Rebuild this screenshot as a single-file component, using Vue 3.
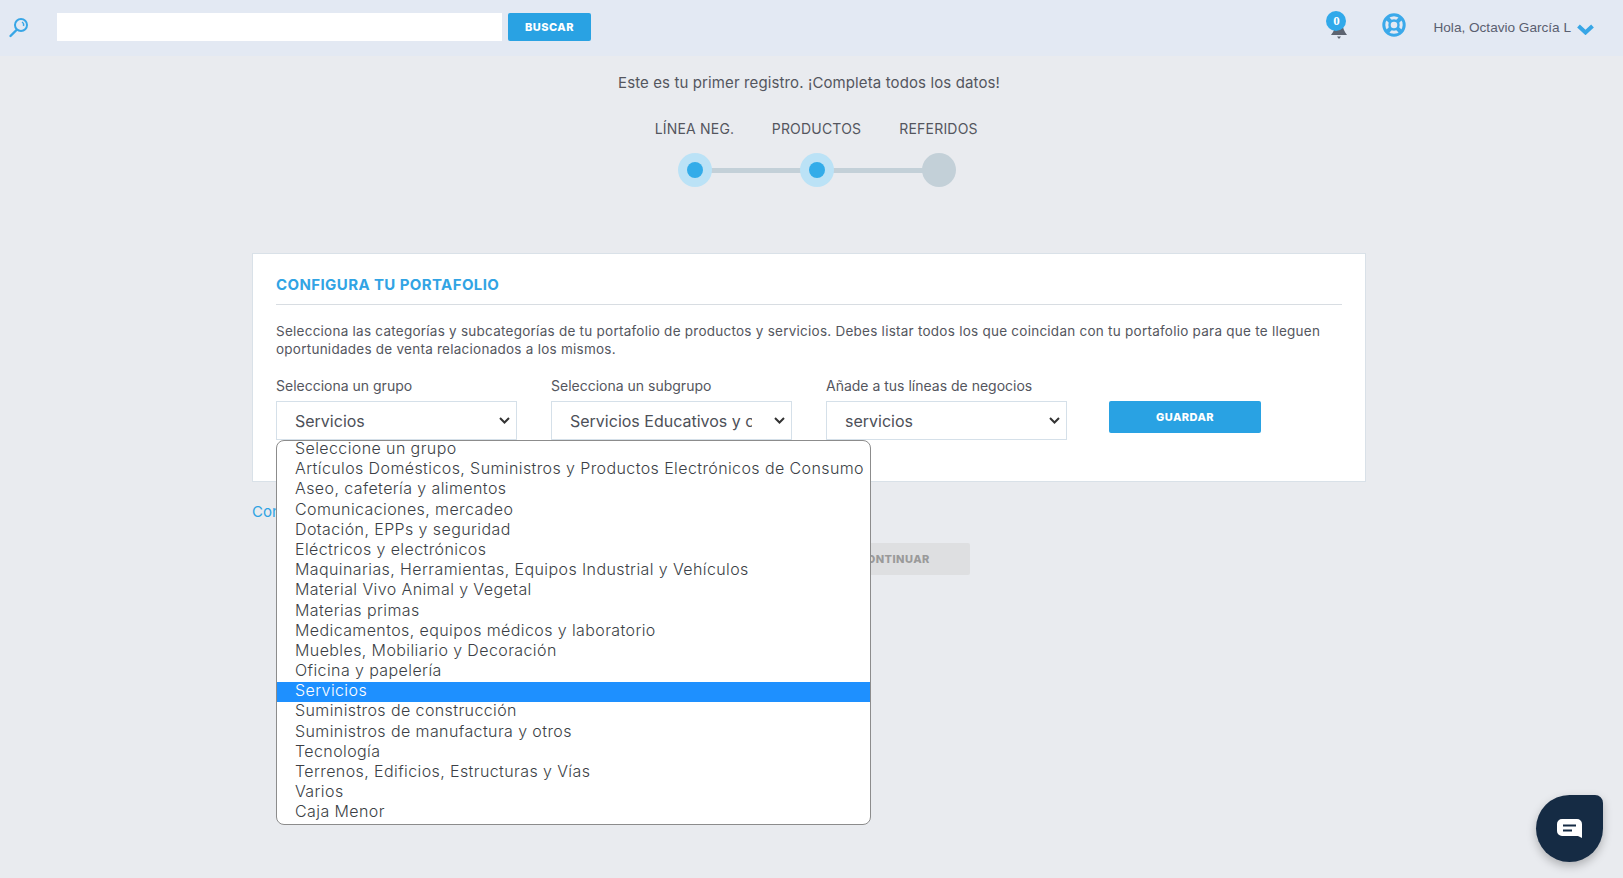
<script setup>
const groups = [
  'Seleccione un grupo',
  'Artículos Domésticos, Suministros y Productos Electrónicos de Consumo',
  'Aseo, cafetería y alimentos',
  'Comunicaciones, mercadeo',
  'Dotación, EPPs y seguridad',
  'Eléctricos y electrónicos',
  'Maquinarias, Herramientas, Equipos Industrial y Vehículos',
  'Material Vivo Animal y Vegetal',
  'Materias primas',
  'Medicamentos, equipos médicos y laboratorio',
  'Muebles, Mobiliario y Decoración',
  'Oficina y papelería',
  'Servicios',
  'Suministros de construcción',
  'Suministros de manufactura y otros',
  'Tecnología',
  'Terrenos, Edificios, Estructuras y Vías',
  'Varios',
  'Caja Menor'
]
const steps = [
  { label: 'LÍNEA NEG.', done: true },
  { label: 'PRODUCTOS', done: true },
  { label: 'REFERIDOS', done: false }
]
</script>

<template>
  <div class="page">
    <header class="topbar">
      <svg class="search-icon" width="22" height="24" viewBox="0 0 22 24" fill="none" stroke="#38a6e6">
        <circle cx="13" cy="10" r="6" stroke-width="2" />
        <path d="M14 7a3.5 3.5 0 0 1 1.5 4" stroke-width="1.4" />
        <path d="M8.5 15 L2.5 21" stroke-width="2.4" stroke-linecap="round" />
      </svg>
      <input class="search-input" type="text" />
      <button class="btn search-btn">BUSCAR</button>
      <div class="spacer"></div>
      <div class="bell">
        <svg width="16" height="17" viewBox="0 0 16 17" fill="#5d6470">
          <path d="M5 0h6c1 5 2 8 5 12H0c3-4 4-7 5-12z" />
          <path d="M6 13.5h4l-2 2.5z" />
        </svg>
        <span class="badge">0</span>
      </div>
      <svg class="buoy" width="24" height="24" viewBox="0 0 24 24" fill="none" stroke="#3ba9ea">
        <circle cx="12" cy="12" r="10.2" stroke-width="3" />
        <circle cx="12" cy="12" r="4.5" stroke-width="2.4" />
        <path d="M5 5l4 4M19 5l-4 4M5 19l4-4M19 19l-4-4" stroke-width="4" />
      </svg>
      <span class="hello">Hola, Octavio García L</span>
      <svg class="chev" width="17" height="11" viewBox="0 0 17 11" fill="none" stroke="#38a6e6" stroke-width="4">
        <path d="M1.5 2 L8.5 8.5 L15.5 2" />
      </svg>
    </header>

    <main class="content">
      <p class="intro">Este es tu primer registro. ¡Completa todos los datos!</p>

      <div class="stepper">
        <div v-for="(s, i) in steps" :key="s.label" class="step">
          <span class="step-label">{{ s.label }}</span>
          <span class="dot" :class="{ done: s.done }"></span>
          <span v-if="i < steps.length - 1" class="bar"></span>
        </div>
      </div>

      <section class="card">
        <h2 class="card-title">CONFIGURA TU PORTAFOLIO</h2>
        <p class="card-text">Selecciona las categorías y subcategorías de tu portafolio de productos y servicios. Debes listar todos los que coincidan con tu portafolio para que te lleguen oportunidades de venta relacionados a los mismos.</p>
        <div class="fields">
          <div class="field">
            <label>Selecciona un grupo</label>
            <select><option>Servicios</option></select>
            <div class="dropdown">
              <div v-for="g in groups" :key="g" class="opt" :class="{ sel: g === 'Servicios' }">{{ g }}</div>
            </div>
          </div>
          <div class="field">
            <label>Selecciona un subgrupo</label>
            <select><option>Servicios Educativos y capacitación</option></select>
          </div>
          <div class="field">
            <label>Añade a tus líneas de negocios</label>
            <select><option>servicios</option></select>
          </div>
          <button class="btn save-btn">GUARDAR</button>
        </div>
      </section>

      <div class="link-row"><a class="link">Con</a></div>
      <div class="continue-row"><button class="btn continue-btn">CONTINUAR</button></div>
    </main>

    <div class="chat">
      <svg width="25" height="19" viewBox="0 0 25 19">
        <path fill="#fff" d="M5 0h15a5 5 0 0 1 5 5v14l-4-2H5a5 5 0 0 1-5-5V5a5 5 0 0 1 5-5z" />
        <path stroke="#152b44" stroke-width="2.2" d="M6 6.5h13M6 11.5h9" />
      </svg>
    </div>
  </div>
</template>

<style>
html, body { margin: 0; background: #e9ebef; }
</style>

<style scoped>
.page {
  position: relative;
  height: 878px;
  overflow: hidden;
  background: #e9ebef;
  font-family: "Inter", "Liberation Sans", sans-serif;
  color: #54565e;
}
.topbar {
  display: flex;
  align-items: center;
  height: 56px;
  padding: 0 0 2px 8px;
  background: #e3e9f3;
  box-sizing: border-box;
}
.search-icon { margin-right: 27px; }
.search-input {
  width: 445px;
  height: 28px;
  border: 0;
  padding: 0;
  background: #fff;
  margin-right: 6px;
}
.btn {
  border: 0;
  border-radius: 2px;
  background: #29a2e3;
  color: #fff;
  font-family: inherit;
  font-weight: 800;
  font-size: 11px;
  letter-spacing: .45px;
  padding: 0;
}
.search-btn { width: 83px; height: 28px; }
.spacer { flex: 1; }
.bell { position: relative; width: 26px; height: 30px; margin-right: 30px; margin-top: 2px; }
.bell svg { position: absolute; left: 5px; top: 10px; }
.badge {
  position: absolute;
  left: 0;
  top: -2px;
  width: 20px;
  height: 20px;
  border-radius: 50%;
  background: #31a9ea;
  color: #fff;
  font: 700 13px/19px "Liberation Serif", serif;
  text-align: center;
}
.buoy { margin-right: 27px; margin-top: -4px; }
.hello { font: 13.6px "Liberation Sans", sans-serif; color: #5a5f70; margin-right: 6px; }
.chev { margin-right: 29px; margin-top: 5px; }

.content { display: flex; flex-direction: column; align-items: center; padding-right: 5px; }
.intro { margin: 18px 0 0; font-size: 15px; line-height: 18px; letter-spacing: .115px; }
.stepper { display: flex; margin: 28px 0 0 15px; }
.step {
  position: relative;
  width: 122px;
  display: flex;
  flex-direction: column;
  align-items: center;
  font-size: 14px;
  letter-spacing: .2px;
}
.step-label { line-height: 18px; white-space: nowrap; }
.dot {
  position: relative;
  z-index: 1;
  width: 34px;
  height: 34px;
  margin-top: 15px;
  border-radius: 50%;
  background: #c3d0d8;
}
.dot.done { background: #bbe2f6; }
.dot.done::after {
  content: "";
  position: absolute;
  left: 9px;
  top: 9px;
  width: 16px;
  height: 16px;
  border-radius: 50%;
  background: #33ace9;
}
.bar {
  position: absolute;
  left: 61px;
  top: 48px;
  width: 122px;
  height: 5px;
  background: #c3d0d8;
}
.card {
  box-sizing: border-box;
  width: 1114px;
  height: 229px;
  margin-top: 66px;
  padding: 22px 23px 0 23px;
  background: #fff;
  border: 1px solid #d9e1e8;
}
.card-title {
  margin: 0;
  padding-bottom: 10px;
  border-bottom: 1px solid #d8dde2;
  color: #31a4e4;
  font-size: 15px;
  line-height: 18px;
  font-weight: 700;
  letter-spacing: .4px;
}
.card-text { margin: 17px 0 0; font-size: 13.5px; line-height: 18px; letter-spacing: .25px; }
.fields { display: flex; margin-top: 19px; }
.field { position: relative; width: 241px; margin-right: 34px; display: flex; flex-direction: column; }
.field label { font-size: 14px; line-height: 18px; margin-bottom: 6px; }
.field select {
  box-sizing: border-box;
  width: 241px;
  height: 39px;
  padding: 0 39px 0 18px;
  appearance: none;
  background: #fff url("data:image/svg+xml,%3Csvg xmlns='http://www.w3.org/2000/svg' width='11' height='7'%3E%3Cpath d='M1 1l4.5 4.5L10 1' fill='none' stroke='%23333' stroke-width='2'/%3E%3C/svg%3E") no-repeat right 6px center;
  border: 1px solid #d5e0e9;
  border-radius: 0;
  font: 16px "Inter", sans-serif;
  color: #4d5058;
}
.save-btn { width: 152px; height: 32px; margin: 24px 0 0 8px; }
.dropdown {
  position: absolute;
  z-index: 5;
  left: 0;
  top: 63px;
  box-sizing: border-box;
  width: 595px;
  height: 385px;
  background: #fff;
  border: 1px solid #8c8c8c;
  border-radius: 8px;
}
.opt {
  height: 20.2px;
  line-height: 17px;
  padding-left: 18px;
  font-size: 16px;
  font-weight: 300;
  letter-spacing: .4px;
  white-space: nowrap;
  color: #3c3f46;
}
.opt:first-child { margin-top: -1px; }
.opt.sel { background: #1e90ff; color: #fff; }
.link-row { width: 1114px; margin-top: 19px; }
.link { color: #2fa3e3; font-size: 15px; line-height: 18px; }
.continue-row { margin-top: 22px; width: 1114px; padding-left: 566px; box-sizing: border-box; }
.continue-btn { width: 152px; height: 32px; background: #dedfe1; color: #9a9a9a; }
.chat {
  position: absolute;
  left: 1536px;
  top: 795px;
  width: 67px;
  height: 67px;
  display: flex;
  align-items: center;
  justify-content: center;
  background: #152b44;
  border-radius: 50% 8px 50% 50%;
  box-shadow: 0 4px 10px rgba(0,0,0,.25);
}
</style>
